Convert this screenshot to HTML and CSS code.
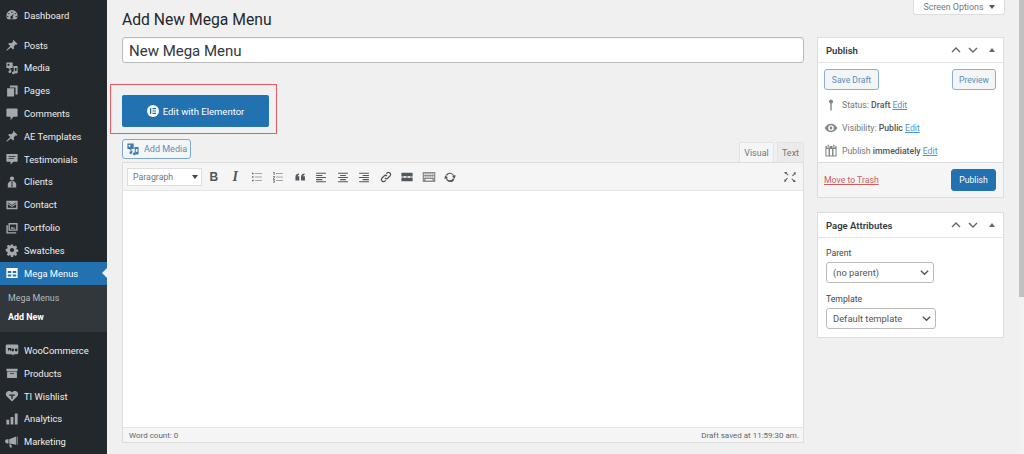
FILE: index.html
```html
<!DOCTYPE html>
<html lang="en">
<head>
<meta charset="utf-8">
<title>Add New Mega Menu</title>
<link rel="stylesheet" href="styles.css">
</head>
<body>
<div class="app">
<nav class="side">
  <ul class="menu first">
    <li><svg class="mi" viewBox="0 0 20 20"><path d="M10 3a8 8 0 0 0-8 8c0 2 .7 3.800 2 5h12a8 8 0 0 0 2-5 8 8 0 0 0-8-8zm0 2a1 1 0 1 1 0 2 1 1 0 0 1 0-2zM5.500 7a1 1 0 1 1 0 2 1 1 0 0 1 0-2zm9 0a1 1 0 1 1 0 2 1 1 0 0 1 0-2zM4 11a1 1 0 1 1 0 2 1 1 0 0 1 0-2zm12 0a1 1 0 1 1 0 2 1 1 0 0 1 0-2zm-3-3-2 4a2 2 0 1 1-2-.5z" fill-rule="evenodd"/></svg>Dashboard</li>
  </ul>
  <ul class="menu group">
    <li><svg class="mi" viewBox="0 0 20 20"><path d="M11.500 2 18 8.500l-1.500 1-1-.5-3 3 .5 3-1.500 1.500-3-3L3 18l-1 0 0-1 5.500-5.500-3-3L6 7l3 .5 3-3-.5-1z"/></svg>Posts</li>
    <li><svg class="mi" viewBox="0 0 20 20"><path d="M2 2h9v8H8v1H5v-1H2zm3 2a1.500 1.500 0 1 0 0 3 1.500 1.500 0 0 0 0-3zM12 7h6v9a2 2 0 1 1-1.500-2V10H14v7a2 2 0 1 1-1.500-2V10H12zM6 12h3v3a2 2 0 1 1-1.500-1.800V13H6z" fill-rule="evenodd"/></svg>Media</li>
    <li><svg class="mi" viewBox="0 0 20 20"><path d="M7 2h11v13h-3V5H7zM3 6h10v12H3z"/></svg>Pages</li>
    <li><svg class="mi" viewBox="0 0 20 20"><path d="M3 2h14a1 1 0 0 1 1 1v10a1 1 0 0 1-1 1h-5l-4 5v-5H3a1 1 0 0 1-1-1V3a1 1 0 0 1 1-1z"/></svg>Comments</li>
    <li><svg class="mi" viewBox="0 0 20 20"><path d="M11.500 2 18 8.500l-1.500 1-1-.5-3 3 .5 3-1.500 1.500-3-3L3 18l-1 0 0-1 5.500-5.500-3-3L6 7l3 .5 3-3-.5-1z"/></svg>AE Templates</li>
    <li><svg class="mi" viewBox="0 0 20 20"><path d="M2 3h16v11h-6l-4 4v-4H2zm3 3v1h10V6zm0 3v1h8V9z" fill-rule="evenodd"/></svg>Testimonials</li>
    <li><svg class="mi" viewBox="0 0 20 20"><path d="M10 2a3 3 0 0 1 3 3 3 3 0 0 1-6 0 3 3 0 0 1 3-3zM7 9h6l3 3v6H4v-6zm2 1 .5 3-.5 3 1 1 1-1-.5-3 .5-3z" fill-rule="evenodd"/></svg>Clients</li>
    <li><svg class="mi" viewBox="0 0 20 20"><path d="M2 4h16v12H2zm2 2v1l6 4 6-4V6l-6 4zm0 3v5h12V9l-6 4z" fill-rule="evenodd"/></svg>Contact</li>
    <li><svg class="mi" viewBox="0 0 20 20"><path d="M5 3h13v11H5zM2 6h2v10h12v2H2zm5-1v7h9V5zm1 6 2-3 2 2 1-1 2 2z" fill-rule="evenodd"/></svg>Portfolio</li>
    <li><svg class="mi" viewBox="0 0 20 20"><path d="m8.500 2h3l.4 2.200 1.500.6 1.900-1.300 2.100 2.100-1.300 1.900.6 1.500 2.300.5v3l-2.300.4-.6 1.500 1.300 1.900-2.100 2.100-1.900-1.300-1.500.6-.4 2.300h-3l-.4-2.300-1.500-.6-1.900 1.300-2.100-2.100 1.300-1.900-.6-1.500L1 11.500v-3l2.300-.5.600-1.500-1.300-1.900 2.100-2.100 1.900 1.300 1.500-.6zM10 7a3 3 0 1 0 0 6 3 3 0 0 0 0-6z" fill-rule="evenodd"/></svg>Swatches</li>
    <li class="current"><svg class="mi" viewBox="0 0 20 20"><path d="M2 3h16v14H2zm2 4v3h5V7zm7 0v3h5V7zm-7 5v3h5v-3zm7 0v3h5v-3z" fill-rule="evenodd"/></svg>Mega Menus<span class="arrow"></span></li>
  </ul>
  <ul class="sub">
    <li>Mega Menus</li>
    <li class="on">Add New</li>
  </ul>
  <ul class="menu group2">
    <li><svg class="mi" viewBox="0 0 20 20"><path d="M3 2h14a2 2 0 0 1 2 2v10a2 2 0 0 1-2 2h-5l1 2-4-2H3a2 2 0 0 1-2-2V4a2 2 0 0 1 2-2zm1 5 1 5 1.500-3 1.500 3 1-5zm7 1a2 2 0 1 0 0 4 2 2 0 0 0 0-4zm5 0a2 2 0 1 0 0 4 2 2 0 0 0 0-4z" fill-rule="evenodd"/></svg>WooCommerce</li>
    <li><svg class="mi" viewBox="0 0 20 20"><path d="M2 4h16v3H2zM3 8h14v9H3zm4 2v1h6v-1z" fill-rule="evenodd"/></svg>Products</li>
    <li><svg class="mi" viewBox="0 0 20 20"><path d="M10 18 2 10C0 7 2 3 6 3c2 0 3 1 4 2 1-1 2-2 4-2 4 0 6 4 4 7zM6 8v1.500h3V14h2V9.500h3V8z" fill-rule="evenodd"/></svg>TI Wishlist</li>
    <li><svg class="mi" viewBox="0 0 20 20"><path d="M2 11h4v7H2zM8 7h4v11H8zM14 2h4v16h-4z"/></svg>Analytics</li>
    <li><svg class="mi" viewBox="0 0 20 20"><path d="M17 2h1v12h-1zM3 6h2v6H3a3 3 0 0 1 0-6zm3 0 10-4v12L6 12zm0 7 3 .8 1 4.200H7z"/></svg>Marketing</li>
  </ul>
</nav>
<main class="content">
  <div class="screen-tab">Screen Options<span class="tri"></span></div>
  <div class="columns">
    <div class="primary">
      <h1>Add New Mega Menu</h1>
      <div class="title-input">New Mega Menu</div>
      <div class="red-box">
        <div class="elementor-btn"><span class="eicon"><svg viewBox="0 0 12 12"><path d="M3 3h1.300v6H3zM5.400 3H9v1.200H5.400zm0 2.400H9v1.200H5.400zm0 2.400H9V9H5.400z"/></svg></span>Edit with Elementor</div>
      </div>
      <div class="editor-top">
        <div class="add-media"><svg viewBox="0 0 20 20"><path d="M2 2h9v8H8v1H5v-1H2zm3 2a1.500 1.500 0 1 0 0 3 1.500 1.500 0 0 0 0-3zM12 7h6v9a2 2 0 1 1-1.500-2V10H14v7a2 2 0 1 1-1.500-2V10H12zM6 12h3v3a2 2 0 1 1-1.500-1.800V13H6z" fill-rule="evenodd"/></svg>Add Media</div>
        <div class="tabs"><span class="tab active">Visual</span><span class="tab">Text</span></div>
      </div>
      <div class="editor">
        <div class="toolbar">
          <div class="format">Paragraph<span class="tri dark"></span></div>
          <span class="tb bold">B</span>
          <span class="tb ital">I</span>
          <svg class="ti" viewBox="0 0 20 20"><path d="M3 4h2v2H3zm4 .5h10v1H7zM3 9h2v2H3zm4 .5h10v1H7zM3 14h2v2H3zm4 .5h10v1H7z"/></svg>
          <svg class="ti" viewBox="0 0 20 20"><path d="M3 3h2v4H4V4H3zm4 1.500h10v1H7zm0 5h10v1H7zm0 5h10v1H7zM3 9h2.500v2.500H4V13h1.500v1H3v-3h1.500v-1H3zm0 6h2.500v3H3v-1h1.500v-.5H3.500v-.8h1V16H3z"/></svg>
          <svg class="ti" viewBox="0 0 20 20"><path d="M8.500 5v2C7 7.300 6.500 8 6.500 9H9v6H3.500V9.500C3.500 7 5.500 5 8.500 5zm8 0v2c-1.500.3-2 1-2 2H17v6h-5.500V9.500c0-2.500 2-4.500 5-4.500z"/></svg>
          <svg class="ti" viewBox="0 0 20 20"><path d="M3 4h14v1.500H3zm0 3h9v1.500H3zm0 3h14v1.500H3zm0 3h9v1.500H3zm0 3h14v1.500H3z"/></svg>
          <svg class="ti" viewBox="0 0 20 20"><path d="M3 4h14v1.500H3zm3 3h8v1.500H6zm-3 3h14v1.500H3zm3 3h8v1.500H6zm-3 3h14v1.500H3z"/></svg>
          <svg class="ti" viewBox="0 0 20 20"><path d="M3 4h14v1.500H3zm5 3h9v1.500H8zm-5 3h14v1.500H3zm5 3h9v1.500H8zm-5 3h14v1.500H3z"/></svg>
          <svg class="ti link" viewBox="0 0 20 20"><path d="M8.500 11.500a3 3 0 0 0 4.200 0l3.300-3.300a3 3 0 0 0-4.200-4.200L10.500 5.300M11.500 8.500a3 3 0 0 0-4.200 0L4 11.800A3 3 0 0 0 8.200 16l1.300-1.300"/></svg>
          <svg class="ti" viewBox="0 0 20 20"><path d="M2 4h16v4.500H2zm0 7.500h16V16H2zM2 9.300h4v1.400H2zm6 0h4v1.400H8zm6 0h4v1.400h-4z"/></svg>
          <svg class="ti kbd" viewBox="0 0 20 20"><path d="M1 3h18v14H1zm2 2v2h2V5zm3 0v2h2V5zm3 0v2h2V5zm3 0v2h2V5zm3 0v2h2V5zM3 9v2h2V9zm3 0v2h2V9zm3 0v2h2V9zm3 0v2h2V9zm3 0v2h2V9zM5 13v2h10v-2z" fill-rule="evenodd"/></svg>
          <svg class="ti" viewBox="0 0 20 20"><path d="M10 4a6 6 0 0 1 5.600 3.800L18 7l-1 5-4-2.500 1.400-.8A4.500 4.500 0 0 0 5.800 8.300L3.800 7.600A6 6 0 0 1 10 4zm-7 4 4 2.500-1.400.8a4.500 4.500 0 0 0 8.600 .4l2 .7A6 6 0 0 1 4.400 12.200L2 13z"/></svg>
          <svg class="ti full" viewBox="0 0 20 20"><path d="M2 3h4l-1 1 3 3-1 1-3-3-1 1zm16 0v4l-1-1-3 3-1-1 3-3-1-1zM2 17v-4l1 1 3-3 1 1-3 3 1 1zm16 0h-4l1-1-3-3 1-1 3 3 1-1z"/></svg>
        </div>
        <div class="edit-area"></div>
        <div class="statusbar"><span>Word count: 0</span><span>Draft saved at 11:59:30 am.</span></div>
      </div>
    </div>
    <aside class="rail">
      <section class="box publish">
        <header class="box-head"><h2>Publish</h2>
          <span class="handles">
            <svg viewBox="0 0 14 14"><path d="M3 9l4-4 4 4" /></svg>
            <svg viewBox="0 0 14 14"><path d="M3 5l4 4 4-4" /></svg>
            <span class="tri up"></span>
          </span>
        </header>
        <div class="pub-body">
          <div class="pub-actions"><span class="btn save">Save Draft</span><span class="btn prev">Preview</span></div>
          <div class="pub-row"><svg viewBox="0 0 20 20"><path d="M10 2a3 3 0 0 1 1 5.800V18H9V7.800A3 3 0 0 1 10 2z"/></svg><span>Status: <b>Draft</b> <a>Edit</a></span></div>
          <div class="pub-row"><svg viewBox="0 0 20 20"><path d="M10 4c4 0 7.500 3 9 6-1.500 3-5 6-9 6s-7.500-3-9-6c1.500-3 5-6 9-6zm0 2a4 4 0 1 0 0 8 4 4 0 0 0 0-8zm0 2a2 2 0 1 1 0 4 2 2 0 0 1 0-4z" fill-rule="evenodd"/></svg><span>Visibility: <b>Public</b> <a>Edit</a></span></div>
          <div class="pub-row"><svg viewBox="0 0 20 20"><path d="M5 1h2v3H5zm8 0h2v3h-2zM2 3h2v2h4V3h4v2h4V3h2v15H2zm1.500 4v9.500h3V7zm5 0v9.500h3V7zm5 0v9.500h3V7z" fill-rule="evenodd"/></svg><span>Publish <b>immediately</b> <a>Edit</a></span></div>
        </div>
        <div class="pub-foot"><a class="trash">Move to Trash</a><span class="btn primary-btn">Publish</span></div>
      </section>
      <section class="box attrs">
        <header class="box-head"><h2>Page Attributes</h2>
          <span class="handles">
            <svg viewBox="0 0 14 14"><path d="M3 9l4-4 4 4" /></svg>
            <svg viewBox="0 0 14 14"><path d="M3 5l4 4 4-4" /></svg>
            <span class="tri up"></span>
          </span>
        </header>
        <div class="attr-body">
          <p>Parent</p>
          <div class="sel w1">(no parent)<svg viewBox="0 0 12 12"><path d="M2 4l4 4 4-4"/></svg></div>
          <p>Template</p>
          <div class="sel w2">Default template<svg viewBox="0 0 12 12"><path d="M2 4l4 4 4-4"/></svg></div>
        </div>
      </section>
    </aside>
  </div>
</main>
<div class="scroll"><div class="thumb"></div></div>
</div>
</body>
</html>
```
FILE: styles.css
```css
* { box-sizing: border-box; }
html, body { margin: 0; height: 454px; overflow: hidden; }
body { font-family: Roboto, "Noto Sans", sans-serif; font-size: 8.700px; color: #444; background: #f0f0f0; }
ul { list-style: none; margin: 0; padding: 0; }
.app { display: flex; height: 454px; overflow: hidden; }
.side { width: 107px; flex: none; background: #23282d; color: #eee; overflow: hidden; font-size: 9.400px; }
.menu li { display: flex; align-items: center; height: 22.800px; padding-left: 5px; position: relative; }
.menu.first { padding-top: 4px; }
.menu.group { padding-top: 7px; }
.menu.group2 { padding-top: 7.500px; }
.mi { width: 14px; height: 14px; margin-right: 5px; fill: #a5a9ad; flex: none; }
.menu li.current { background: #2271b1; color: #fff; }
.current .mi { fill: #fff; }
.arrow { position: absolute; right: 0; top: 6px; border: 5.500px solid transparent; border-right-color: #f0f0f0; border-left-width: 0; }
.sub { background: #32373c; height: 47px; padding: 4px 0 0 8px; font-size: 8.900px; color: #b4b9be; }
.sub li { height: 19px; display: flex; align-items: center; }
.sub .on { color: #fff; font-weight: 700; }
.content { flex: 1; min-width: 0; position: relative; padding: 0 0 0 15px; }
.screen-tab { position: absolute; right: 19px; top: -1px; width: 92px; height: 16px; background: #fff; border: 1px solid #ddd; border-top: 0; border-radius: 0 0 3px 3px; font-size: 8.900px; color: #72777c; display: flex; align-items: center; justify-content: center; gap: 5px; }
.tri { display: inline-block; border: 3.500px solid transparent; border-top: 4px solid #555; border-bottom: 0; }
.tri.up { border-top: 0; border-bottom: 4px solid #666; margin-left: 6px; }
.columns { display: flex; gap: 13px; }
.primary { width: 682px; flex: none; }
h1 { margin: 0; padding-top: 10px; height: 37px; font-size: 15.700px; line-height: 20px; font-weight: 400; color: #23282d; }
.title-input { height: 26px; background: #fff; border: 1px solid #bbb; border-radius: 3px; font-size: 15px; line-height: 26px; padding-left: 6px; color: #32373c; box-shadow: inset 0 1px 1px rgba(0,0,0,.05); }
.red-box { width: 167px; height: 50px; margin: 21px 0 0 -12px; border: 1px solid #f0595f; padding: 10px 0 0 11px; }
.elementor-btn { width: 147px; height: 32px; background: #2271b1; border-radius: 2px; color: #fff; font-size: 9.500px; display: flex; align-items: center; justify-content: center; gap: 4px; }
.eicon { width: 12px; height: 12px; border-radius: 50%; background: #fff; display: block; }
.eicon svg { display: block; fill: #2271b1; }
.editor-top { display: flex; justify-content: space-between; align-items: flex-end; height: 28px; padding-top: 5px; }
.add-media { width: 69px; height: 20px; border: 1px solid #7fa9cc; border-radius: 3px; background: #f3f5f6; color: #5b8fba; font-size: 9px; white-space: nowrap; display: flex; align-items: center; padding-left: 3px; gap: 4px; align-self: flex-start; }
.add-media svg { width: 14px; height: 14px; fill: #3f7aab; flex: none; }
.tabs { display: flex; gap: 3px; }
.tab { height: 20px; background: #ebebeb; border: 1px solid #e2e4e7; border-bottom: 0; color: #72777c; font-size: 9px; display: flex; align-items: center; justify-content: center; width: 27px; }
.tab.active { background: #f5f5f5; width: 35px; }
.editor { height: 281px; border: 1px solid #ddd; background: #fff; display: flex; flex-direction: column; }
.toolbar { height: 28px; background: #f5f5f5; border-bottom: 1px solid #e5e5e5; display: flex; align-items: center; padding-left: 4px; flex: none; }
.format { width: 75px; height: 18px; background: #fff; border: 1px solid #ddd; color: #72777c; font-size: 8.800px; display: flex; align-items: center; justify-content: space-between; padding: 0 3px 0 5px; margin-right: 1px; }
.tri.dark { border-top-color: #444; }
.tb { width: 21.500px; text-align: center; font-family: "Liberation Serif", serif; font-size: 14px; color: #50575e; flex: none; }
.bold { font-family: "Liberation Sans", sans-serif; font-weight: 700; font-size: 12px; }
.ital { font-style: italic; font-weight: 700; }
.ti { width: 14px; height: 14px; margin: 0 3.750px; fill: #50575e; flex: none; }
.link { fill: none; stroke: #50575e; stroke-width: 1.800; }
.kbd { fill: #8a8f94; }
.full { margin-left: auto; margin-right: 6px; }
.edit-area { flex: 1; background: #fff; }
.statusbar { height: 15px; background: #f5f5f5; border-top: 1px solid #e5e5e5; display: flex; justify-content: space-between; align-items: center; padding: 0 4px 0 6px; font-size: 8px; color: #666; flex: none; }
.rail { width: 187px; flex: none; padding-top: 37px; }
.box { background: #fff; border: 1px solid #ddd; margin-bottom: 14px; }
.box-head { display: flex; align-items: center; justify-content: space-between; height: 25px; border-bottom: 1px solid #e5e5e5; padding: 0 8px 0 8px; }
h2 { margin: 0; font-size: 9.500px; font-weight: 600; color: #32373c; }
.handles { display: flex; align-items: center; gap: 3px; }
.handles svg { width: 14px; height: 14px; fill: none; stroke: #666; stroke-width: 1.400; }
.pub-body { padding: 6px 6px 0; height: 99px; }
.pub-actions { display: flex; justify-content: space-between; margin-bottom: 3px; }
.btn { height: 21px; border: 1px solid #8ab0cf; border-radius: 3px; background: #f3f5f6; color: #5b8fba; font-size: 8.600px; display: flex; align-items: center; justify-content: center; }
.save { width: 55px; }
.prev { width: 44px; margin-right: 1px; }
.pub-row { display: flex; align-items: center; height: 23px; color: #72777c; }
.pub-row svg { width: 14px; height: 14px; margin-right: 4px; fill: #82878c; flex: none; }
.pub-row b { font-weight: 500; color: #555; }
a { color: #4f94d4; text-decoration: underline; }
.pub-foot { height: 35px; background: #f5f5f5; border-top: 1px solid #ddd; display: flex; justify-content: space-between; align-items: center; padding: 0 6px; }
.trash { color: #c9605f; }
.primary-btn { background: #2271b1; border-color: #2271b1; color: #fff; height: 22px; width: 45px; margin-right: 1px; }
.attr-body { padding: 6px 8px 0; height: 99px; }
.attr-body p { margin: 0; height: 18px; display: flex; align-items: center; color: #444; }
.sel { height: 21px; border: 1px solid #bbb; border-radius: 3px; background: #fff; color: #555; font-size: 9.400px; display: flex; align-items: center; justify-content: space-between; padding: 0 3px 0 6px; margin-bottom: 7px; }
.sel svg { width: 11px; height: 11px; fill: none; stroke: #555; stroke-width: 1.500; }
.w1 { width: 108px; }
.w2 { width: 110px; }
.scroll { position: absolute; left: 1019px; top: 0; width: 5px; height: 454px; background: #f1f1f1; }
.thumb { height: 297px; background: #c1c1c1; }
```
